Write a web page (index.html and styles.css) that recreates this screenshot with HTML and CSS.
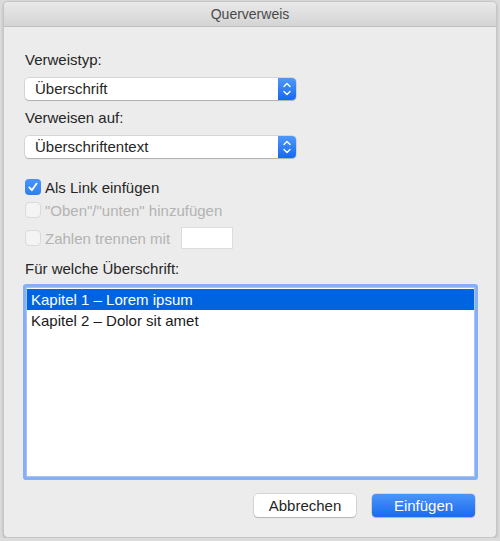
FILE: index.html
```html
<!DOCTYPE html>
<html lang="de">
<head>
    <meta charset="UTF-8">
    <title>Querverweis</title>
    <link rel="stylesheet" href="styles.css">
</head>
<body>
    <div class="window">
        <div class="titlebar">Querverweis</div>
        <div class="content">
            <div class="label first">Verweistyp:</div>
            <div class="popup">
                <span class="popup-text">Überschrift</span>
                <span class="stepper">
                    <svg width="18" height="22" viewBox="0 0 18 22"><path d="M6 8.5 L9 5.5 L12 8.5 M6 13.5 L9 16.5 L12 13.5" fill="none" stroke="#fff" stroke-width="1.4" stroke-linecap="round" stroke-linejoin="round"/></svg>
                </span>
            </div>
            <div class="label">Verweisen auf:</div>
            <div class="popup">
                <span class="popup-text">Überschriftentext</span>
                <span class="stepper">
                    <svg width="18" height="22" viewBox="0 0 18 22"><path d="M6 8.5 L9 5.5 L12 8.5 M6 13.5 L9 16.5 L12 13.5" fill="none" stroke="#fff" stroke-width="1.4" stroke-linecap="round" stroke-linejoin="round"/></svg>
                </span>
            </div>

            <div class="check-row row-link">
                <span class="box checked">
                    <svg width="16" height="16" viewBox="0 0 16 16"><path d="M4.3 8.4 L6.9 11.2 L11.6 4.6" fill="none" stroke="#fff" stroke-width="1.8" stroke-linecap="round" stroke-linejoin="round"/></svg>
                </span>
                <span>Als Link einfügen</span>
            </div>
            <div class="check-row disabled row-oben">
                <span class="box"></span>
                <span>"Oben"/"unten" hinzufügen</span>
            </div>
            <div class="check-row disabled row-zahlen">
                <span class="box"></span>
                <span>Zahlen trennen mit</span>
                <span class="small-field"></span>
            </div>

            <div class="label list-label">Für welche Überschrift:</div>
            <div class="listbox">
                <div class="list-item selected">Kapitel 1 – Lorem ipsum</div>
                <div class="list-item">Kapitel 2 – Dolor sit amet</div>
            </div>

            <div class="buttons">
                <button class="btn">Abbrechen</button>
                <button class="btn primary">Einfügen</button>
            </div>
        </div>
    </div>
</body>
</html>
```

FILE: styles.css
```css
body {
    margin: 0;
    background-color: #dcdcdc;
    font-family: "Liberation Sans", Arial, sans-serif;
    font-size: 15px;
    color: #262626;
}
.window {
    margin: 1px 0 0 3px;
    width: 494px;
    height: 537px;
    box-sizing: border-box;
    background-color: #ececec;
    border: 1px solid #c6c6c6;
    border-radius: 5px;
    overflow: hidden;
    box-shadow: 0 1px 3px rgba(0, 0, 0, 0.2);
}
.titlebar {
    height: 24px;
    line-height: 25px;
    text-align: center;
    font-size: 14px;
    color: #4a4a4a;
    background: linear-gradient(#e9e9e9, #d4d4d4);
    border-bottom: 1px solid #c0c0c0;
}
.content {
    padding: 0 20px 0 21px;
    display: flex;
    flex-direction: column;
}
.label {
    height: 18px;
    line-height: 18px;
    margin-top: 9px;
}
.label.first {
    margin-top: 24px;
}
.popup {
    margin-top: 9px;
    width: 271px;
    height: 22px;
    display: flex;
    align-items: center;
    background-color: #ffffff;
    border-radius: 4px;
    box-shadow: 0 0 0 0.5px rgba(0, 0, 0, 0.18), 0 1px 1px rgba(0, 0, 0, 0.18);
}
.popup-text {
    flex: 1;
    padding-left: 10px;
    line-height: 22px;
}
.stepper {
    width: 18px;
    height: 22px;
    border-radius: 0 4px 4px 0;
    background: linear-gradient(#4e98f9, #1868ef);
}
.stepper svg {
    display: block;
}
.check-row {
    display: flex;
    align-items: center;
    height: 20px;
    margin-top: 3px;
}
.check-row.row-link {
    margin-top: 19px;
}
.check-row.row-zahlen {
    height: 22px;
    margin-top: 7px;
}
.check-row.disabled {
    color: #b3b3b3;
}
.box {
    width: 16px;
    height: 16px;
    box-sizing: border-box;
    margin-right: 4px;
    border-radius: 4px;
    background-color: #f4f4f4;
    border: 1px solid #dadada;
}
.box.checked {
    border: none;
    background: linear-gradient(#4a93f8, #2f7ff4);
}
.box svg {
    display: block;
}
.small-field {
    margin-left: 11px;
    width: 52px;
    height: 22px;
    box-sizing: border-box;
    background-color: #ffffff;
    border: 1px solid #dcdcdc;
}
.list-label {
    margin-top: 11px;
}
.listbox {
    margin-top: 9px;
    margin-left: 1px;
    width: 449px;
    height: 190px;
    box-sizing: border-box;
    padding-top: 1px;
    background-color: #ffffff;
    border: 1px solid #a9c3ee;
    box-shadow: 0 0 0 3px #86b0f6;
    border-radius: 1px;
}
.list-item {
    height: 21px;
    line-height: 21px;
    padding-left: 4px;
    color: #1a1a1a;
}
.list-item.selected {
    background-color: #0064e1;
    color: #ffffff;
}
.buttons {
    display: flex;
    justify-content: flex-end;
    gap: 16px;
    margin-top: 17px;
    padding-right: 1px;
}
.btn {
    height: 23px;
    width: 102px;
    font-family: "Liberation Sans", Arial, sans-serif;
    font-size: 15px;
    color: #262626;
    background-color: #ffffff;
    border: none;
    border-radius: 4px;
    box-shadow: 0 0 0 0.5px rgba(0, 0, 0, 0.2), 0 1px 1px rgba(0, 0, 0, 0.15);
}
.btn.primary {
    width: 103px;
    color: #ffffff;
    background: linear-gradient(#4b95f9, #1a6af0);
}
```
